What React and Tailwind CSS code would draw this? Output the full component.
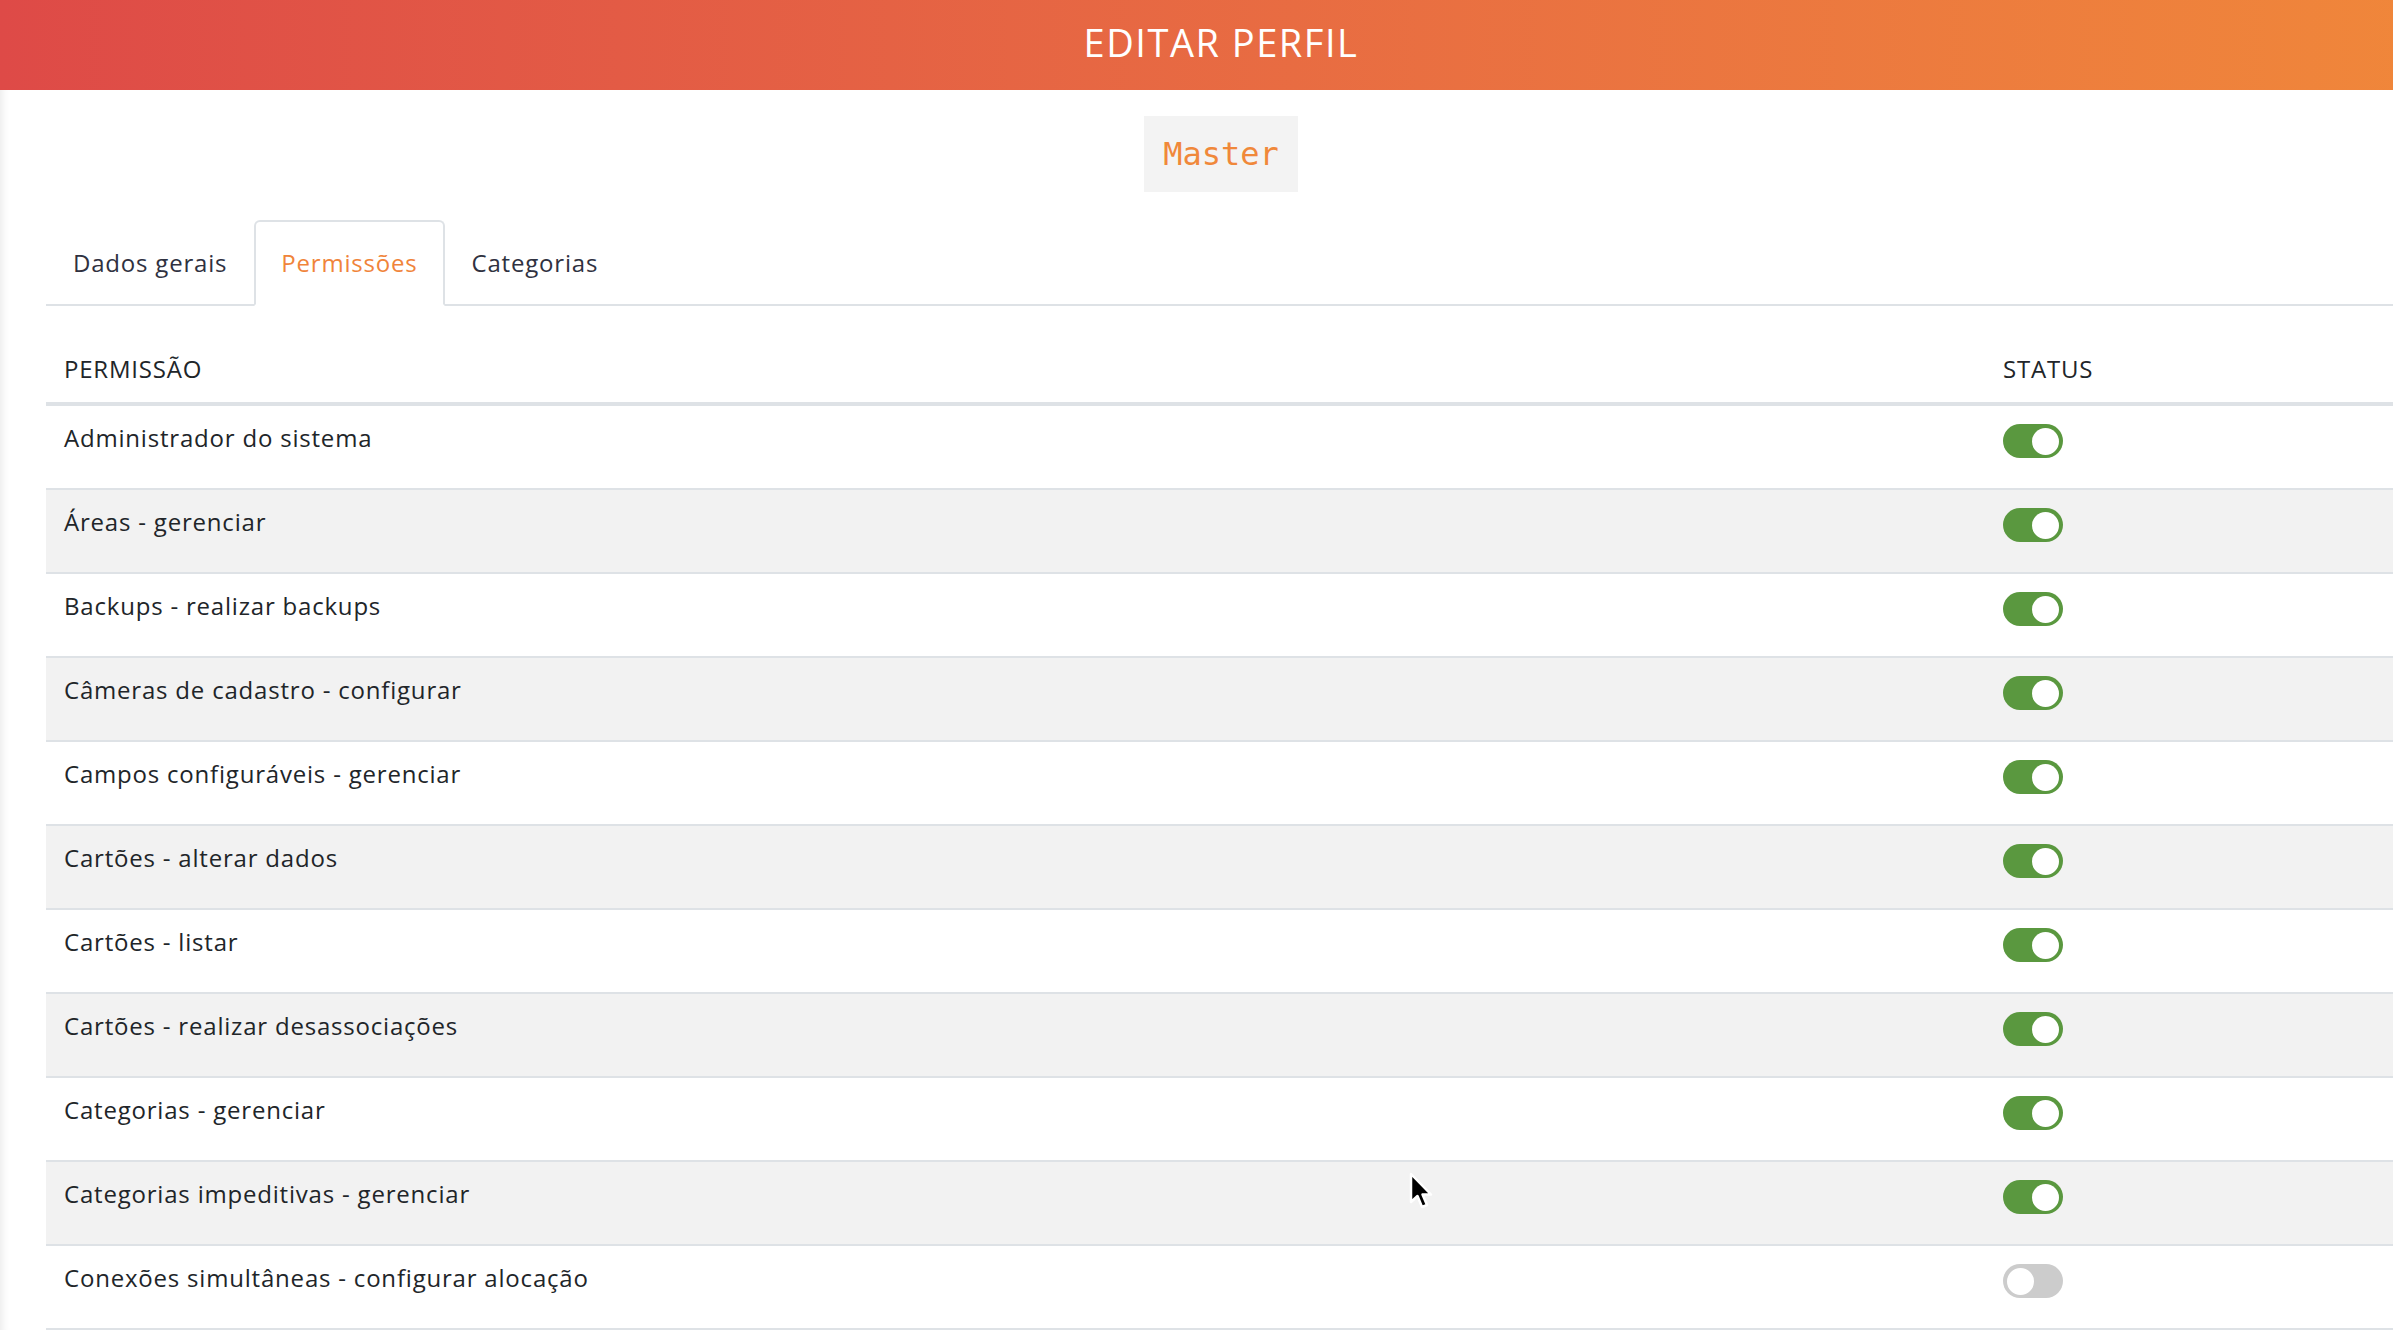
import { useState } from "react";

const permissions = [
	{ id: 1, label: "Administrador do sistema", on: true },
	{ id: 2, label: "Áreas - gerenciar", on: true },
	{ id: 3, label: "Backups - realizar backups", on: true },
	{ id: 4, label: "Câmeras de cadastro - configurar", on: true },
	{ id: 5, label: "Campos configuráveis - gerenciar", on: true },
	{ id: 6, label: "Cartões - alterar dados", on: true },
	{ id: 7, label: "Cartões - listar", on: true },
	{ id: 8, label: "Cartões - realizar desassociações", on: true },
	{ id: 9, label: "Categorias - gerenciar", on: true },
	{ id: 10, label: "Categorias impeditivas - gerenciar", on: true },
	{ id: 11, label: "Conexões simultâneas - configurar alocação", on: false },
];

const tabs = ["Dados gerais", "Permissões", "Categorias"];

const Toggle = ({ on, onClick }) => (
	<button
		onClick={onClick}
		className={`flex items-center w-[60px] h-[34px] rounded-full px-[4px] ${
			on ? "bg-[#5a983f] justify-end" : "bg-[#cccccc] justify-start"
		}`}
	>
		<span className="block w-[27px] h-[27px] rounded-full bg-white"></span>
	</button>
);

const App = () => {
	const [activeTab, setActiveTab] = useState(1);
	const [rows, setRows] = useState(permissions);

	const toggleRow = (id) => {
		setRows(rows.map((r) => (r.id === id ? { ...r, on: !r.on } : r)));
	};

	return (
		<div className="relative w-full h-[1330px] overflow-hidden bg-white font-['Open_Sans',sans-serif] tracking-[0.05em]">
			<div className="w-[2442px]">
				{/* Header */}
				<div className="h-[90px] pb-[6px] flex items-center justify-center bg-gradient-to-r from-[#de4a47] to-[#f0873a]">
					<h1 className="text-white text-[38px] font-normal tracking-[0.04em]">EDITAR PERFIL</h1>
				</div>

				{/* Body */}
				<div className="shadow-[inset_10px_0_8px_-8px_rgba(0,0,0,0.09)] pl-[46px]">
					<div className="flex justify-center pt-[26px] -ml-[46px]">
						<div className="h-[76px] px-[19px] flex items-center bg-[#f3f3f3]">
							<span className="font-['DejaVu_Sans_Mono',monospace] text-[32px] tracking-normal text-[#f0883a]">
								Master
							</span>
						</div>
					</div>

					{/* Tabs */}
					<div className="mt-[28px] flex border-b-2 border-[#dee2e6]">
						{tabs.map((tab, i) => (
							<button
								key={tab}
								onClick={() => setActiveTab(i)}
								className={`h-[86px] -mb-[2px] px-[25px] pb-[1px] flex items-center text-[24px] border-2 rounded-t-[6px] ${
									activeTab === i
										? "border-[#dee2e6] border-b-white bg-white text-[#f0843a]"
										: "border-transparent text-[#2f3140]"
								}`}
							>
								{tab}
							</button>
						))}
					</div>

					{/* Table */}
					<div className="text-[24px] text-[#212529]">
						<div className="h-[100px] flex items-end pb-[16px] border-b-4 border-[#dee2e6]">
							<div className="flex-1 px-[18px] leading-[34px]">PERMISSÃO</div>
							<div className="w-[457px] px-[18px] leading-[34px]">STATUS</div>
						</div>
						{rows.map((row, i) => (
							<div
								key={row.id}
								className={`h-[84px] flex items-start pt-[18px] border-b-2 border-[#dee2e6] ${
									i % 2 === 1 ? "bg-[#f2f2f2]" : "bg-white"
								}`}
							>
								<div className="flex-1 px-[18px] leading-[28px]">{row.label}</div>
								<div className="w-[457px] px-[18px]">
									<Toggle on={row.on} onClick={() => toggleRow(row.id)} />
								</div>
							</div>
						))}
					</div>
				</div>
			</div>

			{/* Mouse cursor */}
			<svg
				className="absolute left-[1408px] top-[1172px] pointer-events-none"
				width="26"
				height="40"
				viewBox="0 0 26 40"
			>
				<path
					d="M3 2 L3 30 L9.5 24 L14 35 L19 33 L14.5 22.5 L23 22.5 Z"
					fill="#000"
					stroke="#fff"
					strokeWidth="2.5"
					strokeLinejoin="round"
				/>
			</svg>
		</div>
	);
};

export default App;
